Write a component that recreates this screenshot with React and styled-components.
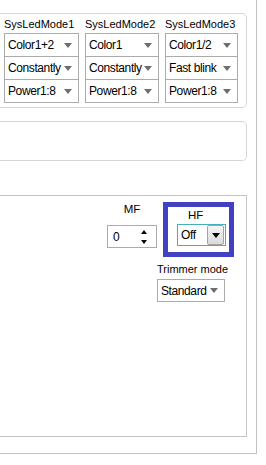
import React from 'react'
import styled, { createGlobalStyle } from 'styled-components'

const Global = createGlobalStyle`
  html, body {
    margin: 0;
    padding: 0;
    background: #fff;
  }
  body {
    font-family: "Liberation Sans", Arial, sans-serif;
    font-size: 11px;
    color: #000;
  }
`

const Viewport = styled.div`
  width: 266px;
  height: 465px;
  overflow: hidden;
`

const Panel = styled.div`
  box-sizing: border-box;
  width: 297px;
  margin-left: -40px;
  padding: 13px 9px 16px 0;
  border-right: 1px solid #c2c2c2;
  border-bottom: 1px solid #c2c2c2;
  display: flex;
  flex-direction: column;
`

const Group = styled.div`
  border: 1px solid #d6d6d6;
  border-left: none;
  border-radius: 0 5px 5px 0;
  padding: 3px 8px 4px 0;
  display: flex;
  justify-content: flex-end;
  gap: 6px;
`

const Column = styled.div`
  flex: none;
  width: ${(p) => p.$w}px;
  display: flex;
  flex-direction: column;
`

const Label = styled.div`
  height: 14px;
  line-height: 14px;
  white-space: nowrap;
`

const ComboStack = styled.div`
  margin-top: 2px;
  display: flex;
  flex-direction: column;
`

const Value = styled.span`
  font-size: 12px;
  letter-spacing: -0.4px;
  white-space: nowrap;
`

const Combo = styled.div`
  box-sizing: border-box;
  flex: none;
  width: ${(p) => (p.$w ? `${p.$w}px` : '100%')};
  height: ${(p) => p.$h || 24}px;
  border: 1px solid #ababab;
  background: #fff;
  display: flex;
  align-items: center;
  justify-content: space-between;
  padding: 0 6px 0 3px;

  & + & {
    margin-top: -1px;
  }
`

const Arrow = styled.span`
  flex: none;
  width: 0;
  height: 0;
  border-left: 4.5px solid transparent;
  border-right: 4.5px solid transparent;
  border-top: 5px solid ${(p) => p.$color || '#6e6e6e'};
`

const EmptyBox = styled.div`
  margin-top: 13px;
  height: 40px;
  box-sizing: border-box;
  border: 1px solid #d6d6d6;
  border-left: none;
  border-radius: 0 5px 5px 0;
`

const Frame = styled.div`
  margin-top: 34px;
  height: 242px;
  box-sizing: border-box;
  border: 1px solid #c4c4c4;
  border-left: none;
  padding: 6px 12px 0 0;
  display: flex;
  justify-content: flex-end;
  align-items: flex-start;
`

const FieldColumn = styled.div`
  flex: none;
  display: flex;
  flex-direction: column;
  align-items: ${(p) => p.$align || 'center'};
`

const FieldLabel = styled(Label)`
  font-size: 11.5px;
`

const Spin = styled.div`
  box-sizing: border-box;
  width: 50px;
  height: 23px;
  margin-top: 9px;
  border: 1px solid #ababab;
  display: flex;
  align-items: center;
  justify-content: space-between;
  padding: 0 9px 0 5px;
`

const SpinArrows = styled.div`
  display: flex;
  flex-direction: column;
  gap: 6px;
`

const Tri = styled.span`
  width: 0;
  height: 0;
  border-left: 3px solid transparent;
  border-right: 3px solid transparent;
  ${(p) => (p.$up ? 'border-bottom: 4px solid #000;' : 'border-top: 4px solid #000;')}
`

const Highlight = styled.div`
  box-sizing: border-box;
  width: 71px;
  height: 55px;
  margin-left: 6px;
  border: 5px solid #4141c2;
  padding: 0 2px 0 9px;
  display: flex;
  flex-direction: column;
`

const HfLabel = styled(FieldLabel)`
  padding-left: 11px;
  margin-top: 1px;
`

const ActiveCombo = styled.div`
  box-sizing: border-box;
  width: 49px;
  height: 22px;
  margin-top: 2px;
  border: 1px solid #4aaebf;
  display: flex;
  align-items: center;
  justify-content: space-between;
  padding: 0 1px 0 3px;
`

const DropButton = styled.div`
  box-sizing: border-box;
  width: 17px;
  height: 20px;
  border: 1px solid #a3a3a3;
  border-radius: 2px;
  background: linear-gradient(#f5f5f5, #dadada);
  display: flex;
  align-items: center;
  justify-content: center;
`

const TrimLabel = styled(Label)`
  margin-top: 5px;
`

const TrimCombo = styled(Combo)`
  margin-top: 3px;
`

const columns = [
  { title: 'SysLedMode1', w: 75, items: ['Color1+2', 'Constantly', 'Power1:8'] },
  { title: 'SysLedMode2', w: 74, items: ['Color1', 'Constantly', 'Power1:8'] },
  { title: 'SysLedMode3', w: 73, items: ['Color1/2', 'Fast blink', 'Power1:8'] },
]

export default function App() {
  return (
    <Viewport>
      <Global />
      <Panel>
        <Group>
          {columns.map((c) => (
            <Column key={c.title} $w={c.w}>
              <Label>{c.title}</Label>
              <ComboStack>
                {c.items.map((it, i) => (
                  <Combo key={i}>
                    <Value>{it}</Value>
                    <Arrow />
                  </Combo>
                ))}
              </ComboStack>
            </Column>
          ))}
        </Group>

        <EmptyBox />

        <Frame>
          <FieldColumn>
            <FieldLabel>MF</FieldLabel>
            <Spin>
              <Value>0</Value>
              <SpinArrows>
                <Tri $up />
                <Tri />
              </SpinArrows>
            </Spin>
          </FieldColumn>
          <FieldColumn $align="flex-start">
            <Highlight>
              <HfLabel>HF</HfLabel>
              <ActiveCombo>
                <Value>Off</Value>
                <DropButton>
                  <Arrow $color="#000" />
                </DropButton>
              </ActiveCombo>
            </Highlight>
            <TrimLabel>Trimmer mode</TrimLabel>
            <TrimCombo $w={68} $h={23}>
              <Value>Standard</Value>
              <Arrow />
            </TrimCombo>
          </FieldColumn>
        </Frame>
      </Panel>
    </Viewport>
  )
}
